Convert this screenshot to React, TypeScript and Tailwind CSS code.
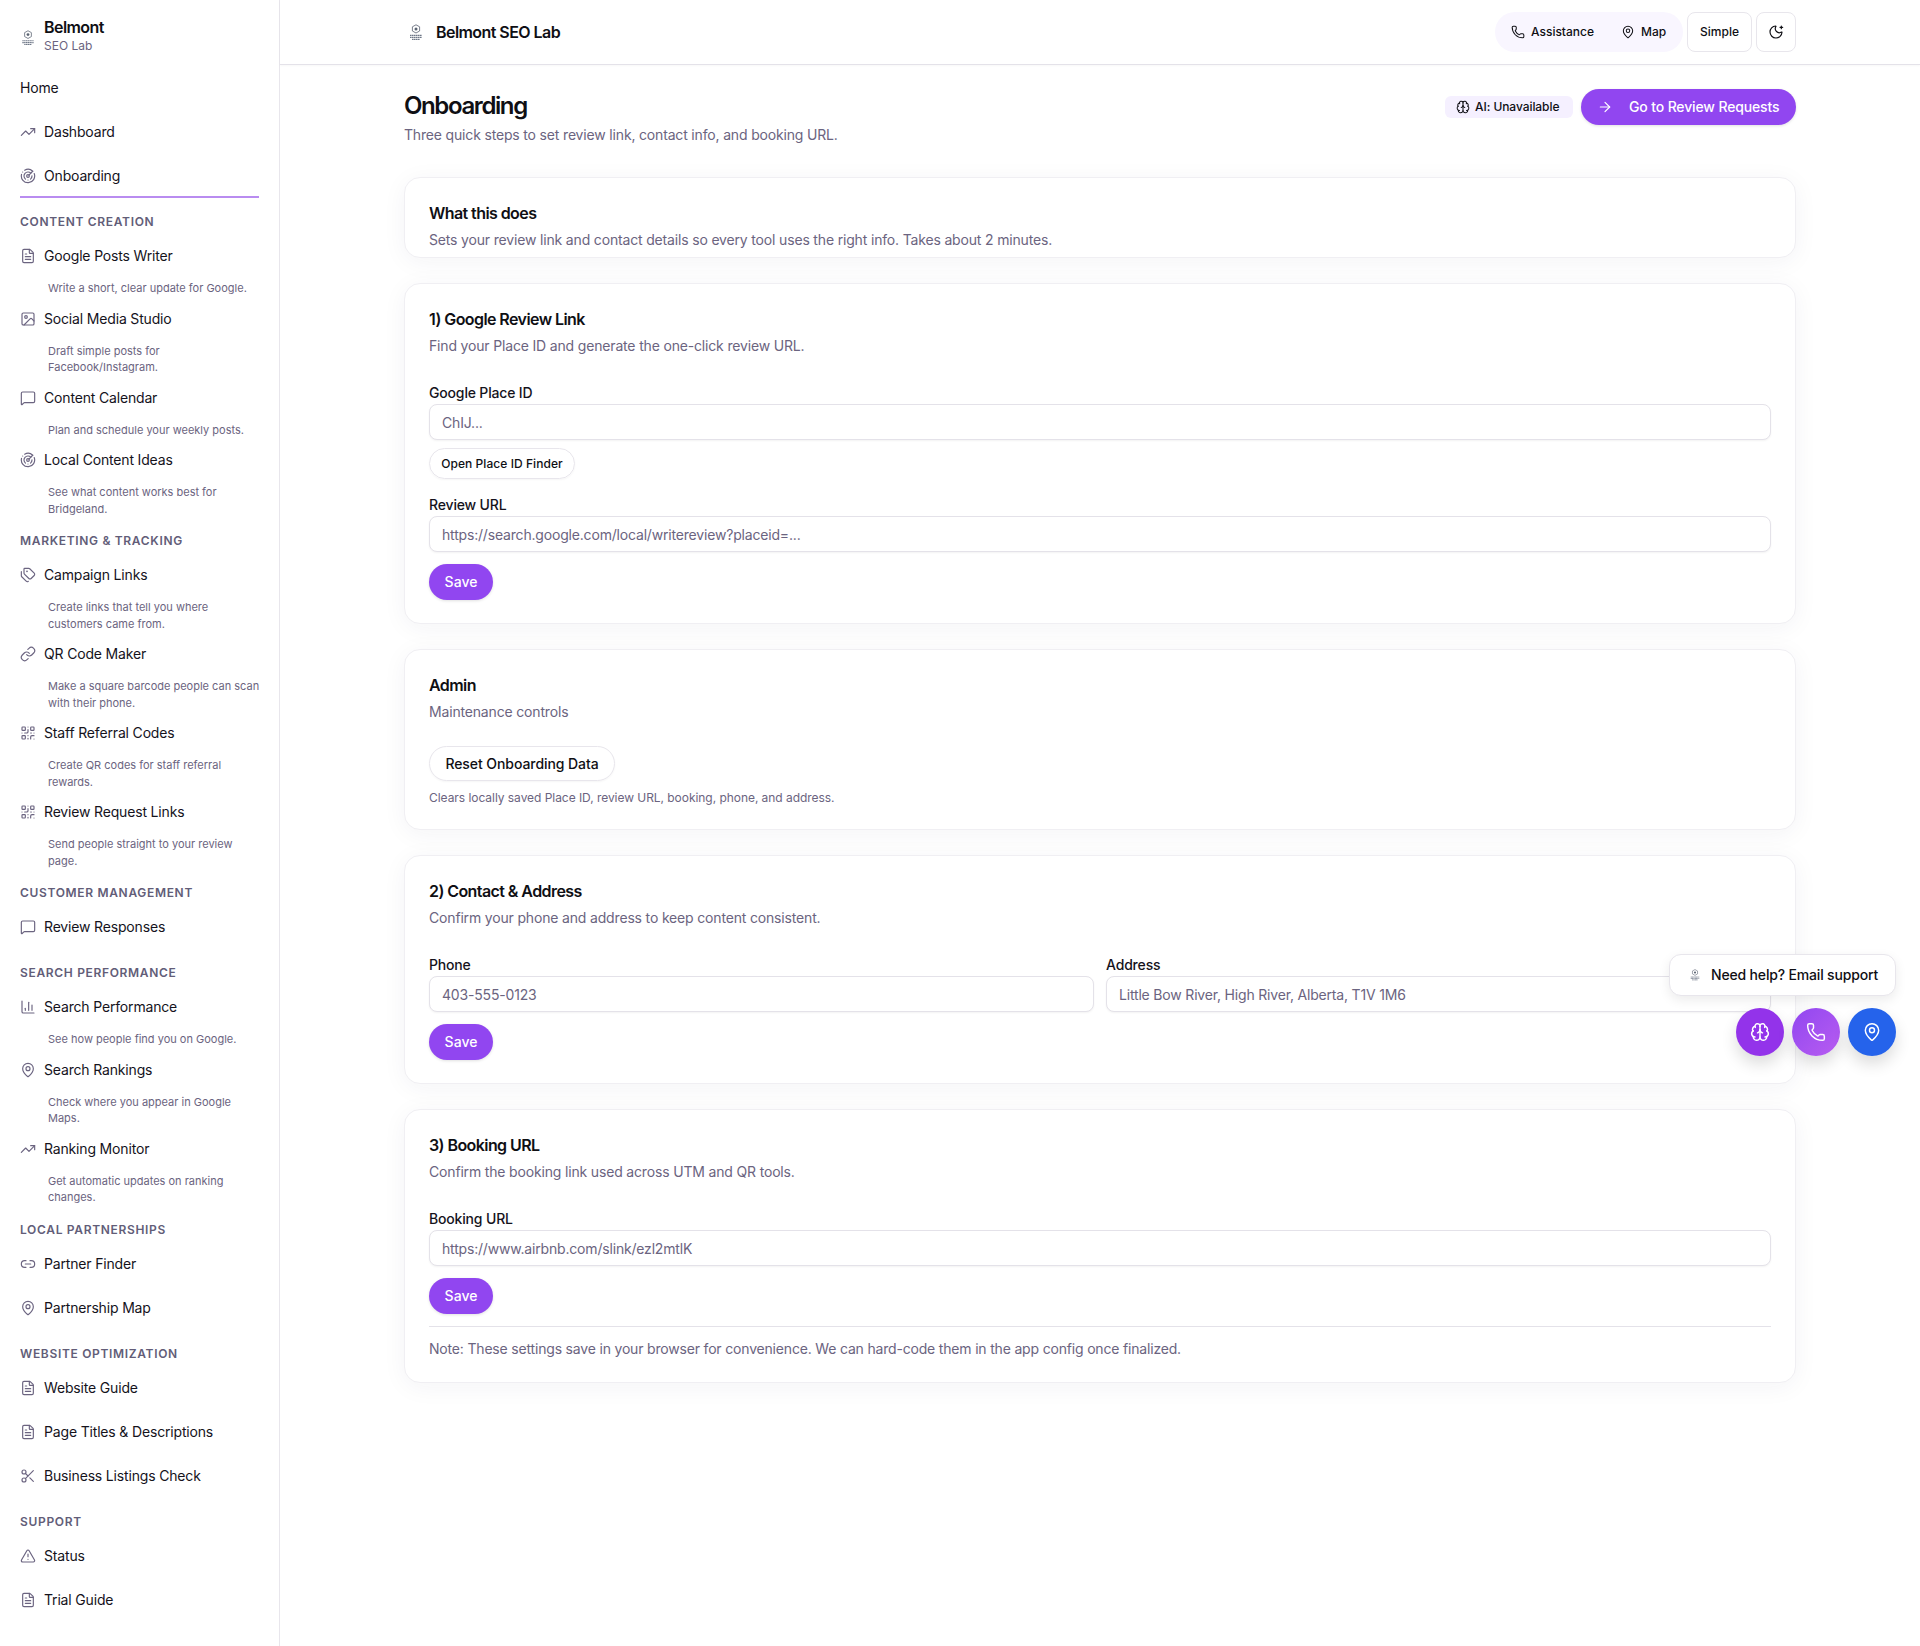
import type { ReactNode } from 'react';
import {
  ArrowRight,
  Brain,
  ChartColumn,
  FileText,
  Image,
  Link,
  Link2,
  MapPin,
  MessageSquare,
  MoonStar,
  Phone,
  QrCode,
  Radar,
  Scissors,
  Tags,
  TrendingUp,
  TriangleAlert,
  type LucideIcon,
} from 'lucide-react';

type NavItem = { label: string; icon?: LucideIcon; desc?: string[] };
type NavSection = { title?: string; items: NavItem[] };

const nav: NavSection[] = [
  {
    title: 'Content Creation',
    items: [
      { label: 'Google Posts Writer', icon: FileText, desc: ['Write a short, clear update for Google.'] },
      { label: 'Social Media Studio', icon: Image, desc: ['Draft simple posts for', 'Facebook/Instagram.'] },
      { label: 'Content Calendar', icon: MessageSquare, desc: ['Plan and schedule your weekly posts.'] },
      { label: 'Local Content Ideas', icon: Radar, desc: ['See what content works best for', 'Bridgeland.'] },
    ],
  },
  {
    title: 'Marketing & Tracking',
    items: [
      { label: 'Campaign Links', icon: Tags, desc: ['Create links that tell you where', 'customers came from.'] },
      { label: 'QR Code Maker', icon: Link, desc: ['Make a square barcode people can scan', 'with their phone.'] },
      { label: 'Staff Referral Codes', icon: QrCode, desc: ['Create QR codes for staff referral', 'rewards.'] },
      { label: 'Review Request Links', icon: QrCode, desc: ['Send people straight to your review', 'page.'] },
    ],
  },
  {
    title: 'Customer Management',
    items: [{ label: 'Review Responses', icon: MessageSquare }],
  },
  {
    title: 'Search Performance',
    items: [
      { label: 'Search Performance', icon: ChartColumn, desc: ['See how people find you on Google.'] },
      { label: 'Search Rankings', icon: MapPin, desc: ['Check where you appear in Google', 'Maps.'] },
      { label: 'Ranking Monitor', icon: TrendingUp, desc: ['Get automatic updates on ranking', 'changes.'] },
    ],
  },
  {
    title: 'Local Partnerships',
    items: [
      { label: 'Partner Finder', icon: Link2 },
      { label: 'Partnership Map', icon: MapPin },
    ],
  },
  {
    title: 'Website Optimization',
    items: [
      { label: 'Website Guide', icon: FileText },
      { label: 'Page Titles & Descriptions', icon: FileText },
      { label: 'Business Listings Check', icon: Scissors },
    ],
  },
  {
    title: 'Support',
    items: [
      { label: 'Status', icon: TriangleAlert },
      { label: 'Trial Guide', icon: FileText },
    ],
  },
];

function Logo({ className }: { className: string }) {
  return (
    <svg viewBox="0 0 14 17" className={className} fill="none">
      <path d="M7 .8l3.6 2v4.2L7 9 3.4 7V2.8z" stroke="#6b7280" strokeWidth="0.9" />
      <circle cx="7" cy="4.9" r="1.5" fill="#5b6472" />
      <path d="M1 11.4h12M1 13.4h12M3 15.4h8" stroke="#6f7888" strokeWidth="1.2" strokeDasharray="1.5 0.4" />
    </svg>
  );
}

function SideRow({ label, icon: Icon, active }: NavItem & { active?: boolean }) {
  return (
    <div className={`flex h-11 items-center gap-2 text-sm tracking-[-0.012em] text-[#15131c] ${active ? 'border-b-2 border-[#b98cf0] pt-0.5' : ''}`}>
      {Icon && <Icon className="h-4 w-4 shrink-0 text-[#6b6480]" strokeWidth={1.75} />}
      {label}
    </div>
  );
}

function Sidebar() {
  return (
    <aside className="w-[280px] shrink-0 border-r border-[#e8e6ec] px-5">
      <div className="flex h-[66px] items-center gap-2 pt-1.5">
        <Logo className="mt-[3px] h-4 w-4" />
        <div className="-mt-0.5">
          <div className="text-base leading-[20px] font-semibold tracking-[-0.035em] text-[#0f0f14]">Belmont</div>
          <div className="mt-px text-xs leading-[16px] text-[#6b6480]">SEO Lab</div>
        </div>
      </div>
      <SideRow label="Home" />
      <SideRow label="Dashboard" icon={TrendingUp} />
      <SideRow label="Onboarding" icon={Radar} active />
      {nav.map((section) => (
        <div key={section.title} className="pt-4">
          <div className="mb-1 text-xs leading-4 font-semibold tracking-[0.056em] text-[#625d78] uppercase">{section.title}</div>
          {section.items.map((item) => (
            <div key={item.label}>
              <SideRow {...item} />
              {item.desc && (
                <div className="mt-0.5 pl-[28px] text-[11px] leading-[16.5px] text-[#6b6480]">
                  {item.desc.map((line) => (
                    <div key={line} className="whitespace-nowrap">{line}</div>
                  ))}
                </div>
              )}
            </div>
          ))}
        </div>
      ))}
    </aside>
  );
}

function Card({ title, sub, children }: { title: string; sub: string; children?: ReactNode }) {
  return (
    <section className="rounded-2xl border border-[#f0eff3] bg-white px-6 py-[23px] shadow-[0_4px_24px_rgba(40,30,80,0.05)]">
      <h2 className="text-base leading-6 font-semibold tracking-[-0.036em] text-[#0f0f14]">{title}</h2>
      <p className="mt-[5px] text-sm leading-5 tracking-[-0.012em] text-[#6b6480]">{sub}</p>
      {children}
    </section>
  );
}

function Field({ label, placeholder, className }: { label: string; placeholder: string; className?: string }) {
  return (
    <div className={className}>
      <label className="block text-sm leading-5 font-medium tracking-[-0.012em] text-[#15131c]">{label}</label>
      <input
        readOnly
        placeholder={placeholder}
        className="mt-px block h-9 w-full rounded-lg border border-[#e4e2e9] bg-white px-3 text-sm tracking-[-0.013em] text-[#15131c] shadow-[0_1px_2px_rgba(0,0,0,0.05)] placeholder:text-[#6b6480]"
      />
    </div>
  );
}

function SaveButton() {
  return (
    <button className="mt-3 block h-9 w-16 rounded-full bg-[#9146f0] text-sm font-medium text-white shadow-[0_1px_3px_rgba(0,0,0,0.12)]">
      Save
    </button>
  );
}

export default function App() {
  return (
    <div className="relative flex min-h-screen bg-white font-['Inter',sans-serif] text-[#0f0f14]">
      <Sidebar />
      <div className="min-w-0 flex-1">
        <header className="h-[65px] border-b border-[#e4e2e9] shadow-[0_1px_2px_rgba(0,0,0,0.03)]">
          <div className="mx-auto flex h-16 w-[1392px] items-center justify-between">
            <div className="flex items-center gap-[13px]">
              <Logo className="ml-[5px] h-[17px] w-[14px]" />
              <span className="text-base font-semibold tracking-[-0.035em]">Belmont SEO Lab</span>
            </div>
            <div className="flex items-center gap-1">
              <div className="flex h-10 w-[188px] items-center gap-[27px] rounded-full bg-[#f9f6ff] pl-4 text-xs font-medium">
                <span className="flex items-center gap-1.5">
                  <Phone className="h-3.5 w-3.5" strokeWidth={1.75} />
                  Assistance
                </span>
                <span className="flex items-center gap-1.5">
                  <MapPin className="h-3.5 w-3.5" strokeWidth={1.75} />
                  Map
                </span>
              </div>
              <button className="h-10 w-[65px] rounded-lg border border-[#e8e6ec] text-xs font-medium">Simple</button>
              <button className="flex h-10 w-10 items-center justify-center rounded-lg border border-[#e8e6ec]">
                <MoonStar className="h-4 w-4" strokeWidth={1.75} />
              </button>
            </div>
          </div>
        </header>

        <main className="mx-auto w-[1392px] pt-6">
          <div className="flex items-start justify-between">
            <div className="pt-px">
              <h1 className="text-2xl leading-8 font-semibold tracking-[-0.058em]">Onboarding</h1>
              <p className="mt-[3px] text-sm leading-5 tracking-[-0.012em] text-[#6b6480]">Three quick steps to set review link, contact info, and booking URL.</p>
            </div>
            <div className="flex items-center gap-2">
              <span className="flex h-[22px] w-[128px] items-center gap-[5px] rounded-md bg-[#f5f0ff] pl-[11px] text-xs font-medium tracking-[-0.005em]">
                <Brain className="h-3.5 w-3.5" strokeWidth={1.75} />
                AI: Unavailable
              </span>
              <button className="flex h-9 w-[215px] items-center gap-4 rounded-full bg-[#9146f0] pl-4 text-sm font-medium tracking-[-0.01em] text-white shadow-[0_1px_3px_rgba(0,0,0,0.12)]">
                <ArrowRight className="h-4 w-4" strokeWidth={1.75} />
                Go to Review Requests
              </button>
            </div>
          </div>

          <div className="mt-8 flex flex-col gap-[25px]">
            <section className="rounded-2xl border border-[#f0eff3] bg-white px-6 pt-[23px] pb-[7px] shadow-[0_4px_24px_rgba(40,30,80,0.05)]">
              <h2 className="text-base leading-6 font-semibold tracking-[-0.036em]">What this does</h2>
              <p className="mt-[5px] text-sm leading-5 tracking-[-0.012em] text-[#6b6480]">Sets your review link and contact details so every tool uses the right info. Takes about 2 minutes.</p>
            </section>

            <Card title="1) Google Review Link" sub="Find your Place ID and generate the one-click review URL.">
              <Field className="mt-[27px]" label="Google Place ID" placeholder="ChIJ..." />
              <button className="mt-2 block h-[31px] w-[146px] rounded-full border border-[#e8e6ec] text-xs font-medium tracking-[0.005em] shadow-[0_1px_2px_rgba(0,0,0,0.04)]">
                Open Place ID Finder
              </button>
              <Field className="mt-4" label="Review URL" placeholder="https://search.google.com/local/writereview?placeid=..." />
              <SaveButton />
            </Card>

            <Card title="Admin" sub="Maintenance controls">
              <button className="mt-6 block h-[35px] w-[186px] rounded-full border border-[#e8e6ec] text-sm font-medium tracking-[-0.005em] shadow-[0_1px_2px_rgba(0,0,0,0.04)]">
                Reset Onboarding Data
              </button>
              <p className="mt-[9px] text-xs leading-4 tracking-[-0.004em] text-[#6b6480]">Clears locally saved Place ID, review URL, booking, phone, and address.</p>
            </Card>

            <Card title="2) Contact & Address" sub="Confirm your phone and address to keep content consistent.">
              <div className="mt-[27px] grid grid-cols-2 gap-3">
                <Field label="Phone" placeholder="403-555-0123" />
                <Field label="Address" placeholder="Little Bow River, High River, Alberta, T1V 1M6" />
              </div>
              <SaveButton />
            </Card>

            <Card title="3) Booking URL" sub="Confirm the booking link used across UTM and QR tools.">
              <Field className="mt-[27px]" label="Booking URL" placeholder="https://www.airbnb.com/slink/ezl2mtlK" />
              <SaveButton />
              <div className="mt-3 border-t border-[#e4e2e9] pt-3 text-sm leading-5 tracking-[-0.013em] text-[#6b6480]">
                Note: These settings save in your browser for convenience. We can hard-code them in the app config once finalized.
              </div>
            </Card>
          </div>
        </main>
      </div>

      {/* floating help + quick actions */}
      <div className="absolute top-[954px] right-6 flex flex-col items-end gap-3">
        <div className="flex h-[42px] w-[227px] items-center gap-[11px] rounded-xl border border-[#e8e6ec] bg-white pl-5 text-sm font-medium tracking-[-0.012em] shadow-[0_4px_12px_rgba(0,0,0,0.08)]">
          <Logo className="h-3 w-2.5" />
          Need help? Email support
        </div>
        <div className="flex gap-2">
          <div className="flex h-12 w-12 items-center justify-center rounded-full bg-[#9333ea] text-white shadow-[0_8px_16px_rgba(0,0,0,0.14)]">
            <Brain className="h-5 w-5" strokeWidth={1.75} />
          </div>
          <div className="flex h-12 w-12 items-center justify-center rounded-full bg-gradient-to-br from-[#9146f0] to-[#b85cf0] text-white shadow-[0_8px_16px_rgba(0,0,0,0.14)]">
            <Phone className="h-5 w-5" strokeWidth={1.75} />
          </div>
          <div className="flex h-12 w-12 items-center justify-center rounded-full bg-[#2563eb] text-white shadow-[0_8px_16px_rgba(0,0,0,0.14)]">
            <MapPin className="h-5 w-5" strokeWidth={1.75} />
          </div>
        </div>
      </div>
    </div>
  );
}
